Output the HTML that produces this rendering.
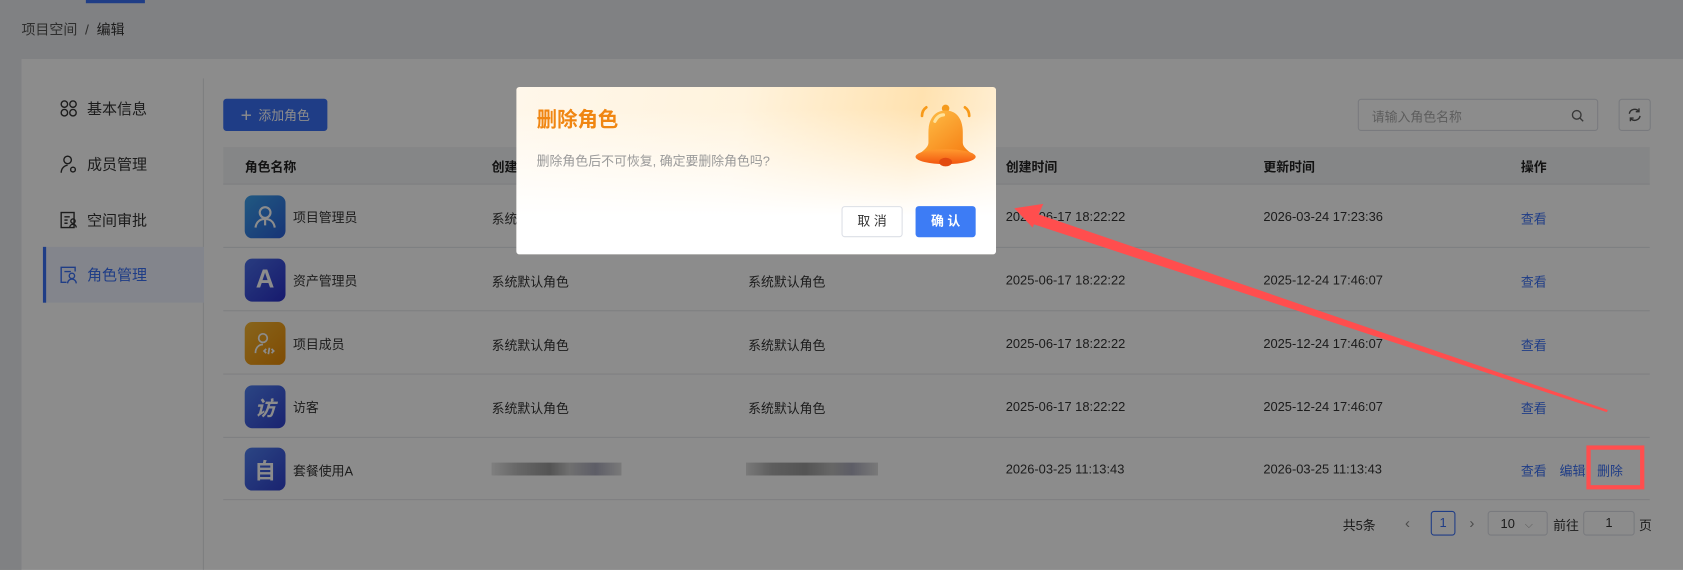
<!DOCTYPE html>
<html><head><meta charset="utf-8">
<style>
*{margin:0;padding:0;box-sizing:border-box}
html,body{width:1683px;height:570px;overflow:hidden;background:#808183}
body{font-family:"Liberation Sans","Noto Sans CJK SC",sans-serif}
#wrap{position:absolute;left:0;top:0;width:1568px;height:531px;transform:scale(1.07334);transform-origin:0 0;overflow:hidden}
.abs{position:absolute}
#page{position:absolute;left:0;top:0;width:1568px;height:531px;background:#eaebee}
.card{position:absolute;left:20px;top:55px;width:1560px;height:490px;background:#fff}
.menu{position:absolute;left:40px;width:150px;height:52px;font-size:14px;color:#333;display:flex;align-items:center;padding-left:15px;gap:8px}
.menu svg{width:18px;height:18px}
.th{position:absolute;top:137px;height:35px;left:208px;width:1329px;background:#f3f4f6;border-bottom:1px solid #e4e6ea}
.cell{position:absolute;font-size:12px;color:#333;white-space:nowrap}
.hd{font-weight:bold;color:#222}
.row{position:absolute;left:208px;width:1329px;border-bottom:1px solid #e6e8ec}
.av{position:absolute;left:228px;width:38px;height:40px;border-radius:7px;display:flex;align-items:center;justify-content:center;color:#fff}
.link{color:#3a6ff5}
#ov{position:absolute;left:0;top:0;width:1568px;height:531px;background:rgba(0,0,0,0.45)}
.modal{position:absolute;left:481px;top:81px;width:447px;height:156px;border-radius:3px;overflow:hidden;
 background:linear-gradient(to bottom,rgba(255,255,255,0) 0,rgba(255,255,255,0) 20px,#fff 120px),linear-gradient(100deg,#fff7ea 0%,#fff3dd 45%,#ffe2b0 80%,#fff2dc 100%)}
</style></head><body>
<div id="wrap">
<div id="page">
  <div class="abs" style="left:80px;top:0;width:55px;height:3px;background:#3a6ff5"></div>
  <div class="abs" style="left:20px;top:17px;font-size:13px;color:#555">项目空间 &nbsp;/&nbsp; <span style="color:#333">编辑</span></div>
  <div class="card"></div>
  <div class="abs" style="left:189px;top:73px;width:1px;height:458px;background:#e4e6ea"></div>
  <div class="menu" style="top:75px"><svg viewBox="0 0 18 18" fill="none" stroke="#333" stroke-width="1.3"><circle cx="5" cy="5" r="3"/><circle cx="13" cy="5" r="3"/><circle cx="5" cy="13" r="3"/><circle cx="13" cy="13" r="3"/></svg>基本信息</div>
  <div class="menu" style="top:127px"><svg viewBox="0 0 18 18" fill="none" stroke="#333" stroke-width="1.3"><circle cx="8" cy="5" r="3.5"/><path d="M2 17c0-4 3-7 6-7"/><circle cx="13" cy="14" r="2.2"/></svg>成员管理</div>
  <div class="menu" style="top:179px"><svg viewBox="0 0 18 18" fill="none" stroke="#333" stroke-width="1.3"><rect x="2" y="2" width="12" height="14"/><path d="M5 6h5M5 9h3M5 12h3"/><circle cx="13" cy="10" r="2"/><path d="M10 16c0-2 1.5-3 3-3s3 1 3 3"/></svg>空间审批</div>
  <div class="menu" style="top:230px;background:#eef3ff;color:#3a6ff5;border-left:3px solid #3a6ff5;padding-left:12px"><svg viewBox="0 0 18 18" fill="none" stroke="#3a6ff5" stroke-width="1.3"><path d="M15 6V2H2v14h5"/><path d="M5 6h6"/><circle cx="12" cy="10" r="2.5"/><path d="M8 17c0-2.5 2-4 4-4s4 1.5 4 4"/></svg>角色管理</div>

  <div class="abs" style="left:208px;top:92px;width:97px;height:30px;background:#3a6ff5;border-radius:3px;color:#fff;font-size:12px;display:flex;align-items:center;justify-content:center;gap:6px"><span style="font-size:18px;font-weight:300;line-height:1">+</span>添加角色</div>
  <div class="abs" style="left:1265px;top:92px;width:224px;height:30px;border:1px solid #dcdfe6;border-radius:3px;background:#fff;font-size:12px;color:#aaa;padding:7px 12px">请输入角色名称
    <svg class="abs" style="right:12px;top:9px" width="12" height="12" viewBox="0 0 12 12" fill="none" stroke="#666" stroke-width="1.3"><circle cx="5" cy="5" r="4"/><path d="M8 8l3 3"/></svg></div>
  <div class="abs" style="left:1508px;top:92px;width:30px;height:30px;border:1px solid #dcdfe6;border-radius:3px;background:#fff">
    <svg class="abs" style="left:7px;top:7px" width="14" height="14" viewBox="0 0 14 14" fill="none" stroke="#555" stroke-width="1.3"><path d="M2 6a5 5 0 0 1 9-2M12 8a5 5 0 0 1-9 2"/><path d="M11 1v3H8M3 13v-3h3"/></svg></div>

  <div class="th"></div>
  <div class="cell hd" style="left:228px;top:147px">角色名称</div>
  <div class="cell hd" style="left:458px;top:147px">创建人</div>
  <div class="cell hd" style="left:697px;top:147px">描述</div>
  <div class="cell hd" style="left:937px;top:147px">创建时间</div>
  <div class="cell hd" style="left:1177px;top:147px">更新时间</div>
  <div class="cell hd" style="left:1417px;top:147px">操作</div>

  <div class="row" style="top:172px;height:59px"></div>
  <div class="row" style="top:231px;height:59px"></div>
  <div class="row" style="top:290px;height:59px"></div>
  <div class="row" style="top:349px;height:59px"></div>
  <div class="row" style="top:408px;height:58px"></div>

  <div class="av" style="top:182px;background:linear-gradient(135deg,#3da2ec,#2a5fd8)"><svg width="24" height="24" viewBox="0 0 24 24" fill="none" stroke="#fff" stroke-width="2"><circle cx="12" cy="8" r="5"/><path d="M3 22c1-6 5-8 9-8s8 2 9 8M12 15v5"/></svg></div>
  <div class="av" style="top:241px;background:linear-gradient(135deg,#4a6ee8,#2a2fc8);font-size:24px;font-weight:bold">A</div>
  <div class="av" style="top:300px;background:linear-gradient(135deg,#f7b733,#e88a06)"><svg width="24" height="24" viewBox="0 0 24 24" fill="none" stroke="#fff" stroke-width="1.6"><circle cx="10" cy="7" r="4"/><path d="M3 21c0-5 3-8 7-8M13 17l-2 2 2 2M18 17l2 2-2 2M16 16l-1 6"/></svg></div>
  <div class="av" style="top:359px;background:linear-gradient(135deg,#4f7ff0,#3040cc);font-size:19px;font-weight:bold;font-style:italic">访</div>
  <div class="av" style="top:417px;background:linear-gradient(135deg,#4f7ff0,#3040cc);font-size:20px;font-weight:bold">自</div>

  <div class="cell" style="left:273px;top:194px">项目管理员</div>
  <div class="cell" style="left:273px;top:253px">资产管理员</div>
  <div class="cell" style="left:273px;top:312px">项目成员</div>
  <div class="cell" style="left:273px;top:371px">访客</div>
  <div class="cell" style="left:273px;top:430px">套餐使用A</div>

  <div class="cell" style="left:458px;top:195px">系统默认角色</div>
  <div class="cell" style="left:458px;top:254px">系统默认角色</div><div class="cell" style="left:697px;top:254px">系统默认角色</div>
  <div class="cell" style="left:458px;top:313px">系统默认角色</div><div class="cell" style="left:697px;top:313px">系统默认角色</div>
  <div class="cell" style="left:458px;top:372px">系统默认角色</div><div class="cell" style="left:697px;top:372px">系统默认角色</div>
  <div class="abs" style="left:458px;top:431px;width:121px;height:12px;background:linear-gradient(90deg,#e8e8e8,#bbb 20%,#999 45%,#ccc 60%,#aab 80%,#ddd)"></div>
  <div class="abs" style="left:695px;top:431px;width:123px;height:12px;background:linear-gradient(90deg,#ddd,#aaa 20%,#999 45%,#bbb 65%,#aab 80%,#ddd)"></div>

  <div class="cell" style="left:937px;top:195px">2025-06-17 18:22:22</div><div class="cell" style="left:1177px;top:195px">2026-03-24 17:23:36</div>
  <div class="cell" style="left:937px;top:254px">2025-06-17 18:22:22</div><div class="cell" style="left:1177px;top:254px">2025-12-24 17:46:07</div>
  <div class="cell" style="left:937px;top:313px">2025-06-17 18:22:22</div><div class="cell" style="left:1177px;top:313px">2025-12-24 17:46:07</div>
  <div class="cell" style="left:937px;top:372px">2025-06-17 18:22:22</div><div class="cell" style="left:1177px;top:372px">2025-12-24 17:46:07</div>
  <div class="cell" style="left:937px;top:430px">2026-03-25 11:13:43</div><div class="cell" style="left:1177px;top:430px">2026-03-25 11:13:43</div>

  <div class="cell link" style="left:1417px;top:195px">查看</div>
  <div class="cell link" style="left:1417px;top:254px">查看</div>
  <div class="cell link" style="left:1417px;top:313px">查看</div>
  <div class="cell link" style="left:1417px;top:372px">查看</div>
  <div class="cell link" style="left:1417px;top:430px">查看</div>
  <div class="cell link" style="left:1453px;top:430px">编辑</div>
  <div class="cell link" style="left:1488px;top:430px">删除</div>

  <div class="cell" style="left:1251px;top:481px">共5条</div>
  <div class="cell" style="left:1309px;top:479px;color:#888;font-size:14px">‹</div>
  <div class="abs" style="left:1333px;top:476px;width:23px;height:23px;border:1px solid #3a6ff5;border-radius:3px;color:#3a6ff5;font-size:12px;text-align:center;line-height:21px">1</div>
  <div class="cell" style="left:1369px;top:479px;color:#888;font-size:14px">›</div>
  <div class="abs" style="left:1386px;top:476px;width:56px;height:23px;border:1px solid #dcdfe6;border-radius:3px;font-size:12px;color:#333;padding:4px 11px">10 <span style="color:#aaa;font-size:10px;margin-left:6px">⌵</span></div>
  <div class="cell" style="left:1447px;top:481px">前往</div>
  <div class="abs" style="left:1475px;top:476px;width:48px;height:23px;border:1px solid #dcdfe6;border-radius:3px;font-size:12px;color:#333;text-align:center;line-height:21px">1</div>
  <div class="cell" style="left:1527px;top:481px">页</div>
</div>
<div id="ov"></div>

<div class="modal">
  <div class="abs" style="left:19px;top:16px;font-size:19px;font-weight:bold;color:#f08612">删除角色</div>
  <div class="abs" style="left:19px;top:60px;font-size:12px;color:#999">删除角色后不可恢复, 确定要删除角色吗?</div>
  <svg class="abs" style="left:368px;top:14px" width="64" height="64" viewBox="0 0 64 64">
    <defs><linearGradient id="bg" x1="0" y1="0" x2="1" y2="1"><stop offset="0" stop-color="#ffc24a"/><stop offset="1" stop-color="#f57a10"/></linearGradient>
    <linearGradient id="bg2" x1="0" y1="0" x2="0" y2="1"><stop offset="0" stop-color="#ff9a2e"/><stop offset="1" stop-color="#f2560f"/></linearGradient></defs>
    <path d="M14 5c-3 2-4 5-4 8" stroke="#f79a1a" stroke-width="2.5" fill="none" stroke-linecap="round"/>
    <path d="M50 5c3 2 4 5 4 8" stroke="#f79a1a" stroke-width="2.5" fill="none" stroke-linecap="round"/>
    <circle cx="32" cy="6" r="3.5" fill="#f59a1c"/>
    <path d="M32 8c-11 0-16 9-16 20v10c0 4-5 8-10 11h52c-5-3-10-7-10-11V28c0-11-5-20-16-20z" fill="url(#bg)"/>
    <ellipse cx="32" cy="51" rx="28" ry="7" fill="url(#bg2)"/>
    <ellipse cx="32" cy="56" rx="6" ry="4" fill="#e24a10"/>
    <path d="M22 18c2-4 5-6 8-6" stroke="#ffe29a" stroke-width="3" fill="none" stroke-linecap="round"/>
  </svg>
  <div class="abs" style="left:303px;top:111px;width:57px;height:29px;border:1px solid #dcdfe6;border-radius:3px;background:#fff;font-size:12px;color:#333;text-align:center;line-height:27px">取 消</div>
  <div class="abs" style="left:372px;top:111px;width:56px;height:29px;background:#3d7cf5;border-radius:3px;font-size:12px;color:#fff;text-align:center;line-height:29px;font-weight:bold">确 认</div>
</div>

<svg class="abs" style="left:0;top:0" width="1568" height="531" viewBox="0 0 1568 531">
  <polygon points="1498,382 960,197 962,204 1497,384" fill="#ff4e4e"/>
  <polygon points="1497,384 960,198 957,207" fill="#ff4e4e"/>
  <polygon points="945,194 972,190 962,212" fill="#ff4e4e"/>
  <rect x="1480" y="417" width="50" height="37" fill="none" stroke="#ff4e4e" stroke-width="4"/>
</svg>
</div>
</body></html>
